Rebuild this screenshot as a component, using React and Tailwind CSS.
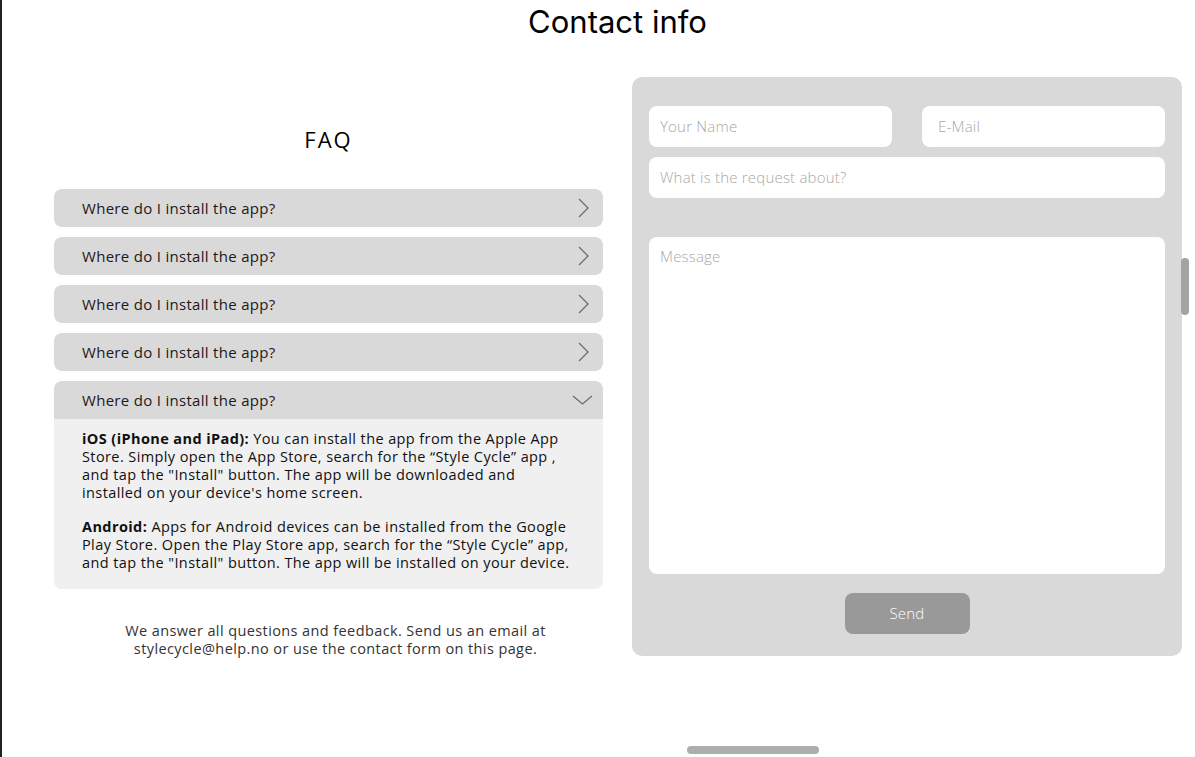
import React from 'react'

const body = { fontFamily: '"Open Sans", "Liberation Sans", sans-serif' }

function ChevronRight() {
  return (
    <svg width="11" height="20" viewBox="0 0 11 20" fill="none">
      <path d="M1 1 L10 10 L1 19" stroke="#766868" strokeWidth="1.3" />
    </svg>
  )
}

function ChevronDown() {
  return (
    <svg width="21" height="10" viewBox="0 0 21 10" fill="none">
      <path d="M1 1 L10.5 9 L20 1" stroke="#766868" strokeWidth="1.3" />
    </svg>
  )
}

function FaqRow({ open }) {
  return (
    <div className={`h-[38px] bg-[#d9d9d9] flex items-center justify-between pl-[28px] ${open ? 'rounded-t-[8px] pr-[10px]' : 'rounded-[8px] pr-[14px]'}`}>
      <span className="text-[15px] tracking-[0.3px] text-[#1a1a1a]">Where do I install the app?</span>
      {open ? <ChevronDown /> : <ChevronRight />}
    </div>
  )
}

export default function App() {
  const faqs = [0, 1, 2, 3]
  return (
    <div className="relative h-[757px] w-[1195px] overflow-hidden bg-white border-l-2 border-[#222]" style={body}>
      <h1 className="pl-[38px] pt-[4px] text-center text-[31px] leading-[36px] text-black" style={{ fontFamily: 'Inter, sans-serif' }}>Contact info</h1>

      <div className="flex pl-[52px] pt-[37px]">
        <div className="w-[549px]">
          <h2 className="mt-[49px] text-center text-[22px] leading-[26px] tracking-[2px] text-black">FAQ</h2>
          <div className="mt-[37px] flex flex-col gap-[10px]">
            {faqs.map(i => <FaqRow key={i} />)}
            <div>
              <FaqRow open />
              <div className="rounded-b-[8px] bg-[#f0f0f0] pl-[28px] pr-[10px] pt-[11px] pb-[17px] text-[14.5px] leading-[18px] tracking-[0.4px] text-[#111]">
                <p><b className="font-bold">iOS (iPhone and iPad):</b> You can install the app from the Apple App<br />Store. Simply open the App Store, search for the “Style Cycle” app ,<br />and tap the "Install" button. The app will be downloaded and<br />installed on your device's home screen.</p>
                <p className="mt-[16px]"><b className="font-bold">Android:</b> Apps for Android devices can be installed from the Google<br />Play Store. Open the Play Store app, search for the “Style Cycle” app,<br />and tap the "Install" button. The app will be installed on your device.</p>
              </div>
            </div>
          </div>
          <p className="mt-[33px] pl-[14px] text-center text-[14.5px] leading-[18px] tracking-[0.4px] text-[#333]">
            We answer all questions and feedback. Send us an email at<br />stylecycle@help.no or use the contact form on this page.
          </p>
        </div>

        <div className="ml-[29px] w-[550px] h-[579px] rounded-[10px] bg-[#d9d9d9] px-[17px] pt-[29px]">
          <div className="grid grid-cols-2 gap-[30px]">
            <div className="h-[41px] rounded-[8px] bg-white px-[11px] flex items-center text-[15px] tracking-[0.2px] font-light text-[#a8a8a8]">Your Name</div>
            <div className="h-[41px] rounded-[8px] bg-white px-[16px] flex items-center text-[15px] tracking-[0.2px] font-light text-[#a8a8a8]">E-Mail</div>
          </div>
          <div className="mt-[10px] h-[41px] rounded-[8px] bg-white px-[11px] flex items-center text-[15px] tracking-[0.2px] font-light text-[#a8a8a8]">What is the request about?</div>
          <div className="mt-[39px] h-[337px] rounded-[8px] bg-white px-[11px] pt-[8px] text-[15px] tracking-[0.2px] font-light text-[#a8a8a8]">Message</div>
          <div className="mt-[19px] flex justify-center">
            <button className="h-[41px] w-[125px] rounded-[8px] bg-[#999999] text-[15px] tracking-[0.2px] font-light text-white">Send</button>
          </div>
        </div>
      </div>

      <div className="absolute left-[1179px] top-[258px] h-[57px] w-[8px] rounded-full bg-[#a3a3a3]" />
      <div className="absolute left-[685px] top-[746px] h-[8px] w-[132px] rounded-full bg-[#adadad]" />
    </div>
  )
}
